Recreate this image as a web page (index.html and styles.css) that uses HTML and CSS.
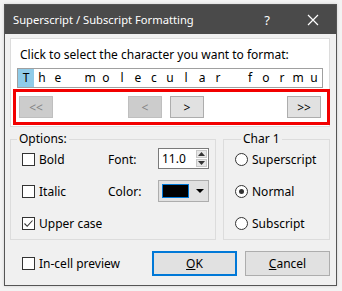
FILE: index.html
```html
<!DOCTYPE html>
<html lang="en">
<head>
    <meta charset="UTF-8">
    <title>Superscript / Subscript Formatting</title>
    <link rel="stylesheet" href="styles.css">
</head>
<body>
    <div class="window">
        <div class="titlebar">
            <span class="title">Superscript / Subscript Formatting</span>
            <span class="help">?</span>
            <span class="close">
                <svg width="12" height="12" viewBox="0 0 12 12"><path d="M1 1L11 11M11 1L1 11" stroke="#fff" stroke-width="1.2"/></svg>
            </span>
        </div>
        <div class="content">
            <div class="select-panel">
                <div class="hint">Click to select the character you want to format:</div>
                <div class="chars">
                    <span class="ch selected">T</span><span class="ch">h</span><span class="ch">e</span><span class="ch"></span><span class="ch">m</span><span class="ch">o</span><span class="ch">l</span><span class="ch">e</span><span class="ch">c</span><span class="ch">u</span><span class="ch">l</span><span class="ch">a</span><span class="ch">r</span><span class="ch"></span><span class="ch">f</span><span class="ch">o</span><span class="ch">r</span><span class="ch">m</span><span class="ch">u</span>
                </div>
                <div class="nav">
                    <button class="btn small" disabled>&lt;&lt;</button>
                    <div class="nav-mid">
                        <button class="btn small" disabled>&lt;</button>
                        <button class="btn small">&gt;</button>
                    </div>
                    <button class="btn small last">&gt;&gt;</button>
                </div>
            </div>

            <div class="groups">
                <fieldset class="group options">
                    <legend>Options:</legend>
                    <div class="opt-grid">
                        <label class="check"><span class="box"></span>Bold</label>
                        <span class="field-label">Font:</span>
                        <div class="spinner">
                            <span class="spin-value">11.0</span>
                            <span class="spin-btns">
                                <span class="spin-btn"><svg width="7" height="4" viewBox="0 0 7 4"><path d="M0 4L3.5 0L7 4Z" fill="#333"/></svg></span>
                                <span class="spin-btn"><svg width="7" height="4" viewBox="0 0 7 4"><path d="M0 0L3.5 4L7 0Z" fill="#333"/></svg></span>
                            </span>
                        </div>

                        <label class="check"><span class="box"></span>Italic</label>
                        <span class="field-label">Color:</span>
                        <div class="color-pick">
                            <span class="swatch"></span>
                            <svg width="8" height="4" viewBox="0 0 8 4"><path d="M0 0L4 4L8 0Z" fill="#000"/></svg>
                        </div>

                        <label class="check upper"><span class="box checked"><svg width="11" height="11" viewBox="0 0 11 11"><path d="M1.5 5.5L4.2 8.3L9.5 2.5" stroke="#333" stroke-width="1.1" fill="none"/></svg></span>Upper case</label>
                    </div>
                </fieldset>

                <fieldset class="group char">
                    <legend>Char 1</legend>
                    <label class="radio"><span class="dot"></span>Superscript</label>
                    <label class="radio"><span class="dot on"></span>Normal</label>
                    <label class="radio"><span class="dot"></span>Subscript</label>
                </fieldset>
            </div>

            <div class="footer">
                <label class="check"><span class="box"></span>In-cell preview</label>
                <div class="actions">
                    <button class="btn big default"><u>O</u>K</button>
                    <button class="btn big"><u>C</u>ancel</button>
                </div>
            </div>
        </div>
    </div>
</body>
</html>
```

FILE: styles.css
```css
body, html {
    margin: 0;
    background: #f3f3f3;
    font-family: "Noto Sans", "Open Sans", sans-serif;
    font-size: 12px;
    color: #000;
}

.window {
    margin: 4px;
    width: 331px;
    height: 280px;
    border: 1px solid #555;
    background: #f0f0f0;
    display: flex;
    flex-direction: column;
    box-shadow: 0 0 3px rgba(0, 0, 0, 0.15);
}

.titlebar {
    height: 29px;
    background: #4a4a4a;
    color: #fff;
    display: flex;
    align-items: center;
    padding-left: 8px;
}

.title {
    flex: 1;
    font-size: 11.2px;
}

.help {
    width: 46px;
    text-align: center;
    font-size: 13px;
}

.close {
    width: 46px;
    display: flex;
    justify-content: center;
}

.content {
    padding: 4px 6px 0 5px;
}

.select-panel {
    background: #fff;
    border: 1px solid #dcdcdc;
    height: 87px;
    padding: 0 0 0 2px;
}

.hint {
    margin: 8px 0 0 7px;
    line-height: 16px;
}

.chars {
    margin: 5px 0 0 4px;
    width: 304px;
    height: 18px;
    border: 1px solid #a0a0a0;
    display: grid;
    grid-template-columns: repeat(19, 1fr);
}

.ch {
    text-align: center;
    line-height: 18px;
}

.ch.selected {
    background: #8fcbe8;
}

.nav {
    margin-top: 1px;
    width: 317px;
    height: 36px;
    box-sizing: border-box;
    border: 3px solid #f20000;
    display: flex;
    align-items: center;
    padding: 0 6px 0 3px;
}

.nav-mid {
    display: flex;
    gap: 8px;
    margin-left: 75px;
}

.nav .last {
    margin-left: auto;
}

.btn {
    font-family: inherit;
    font-size: 12px;
    background: #e1e1e1;
    border: 1px solid #adadad;
    color: #000;
    padding: 0;
    margin: 0;
}

.btn.small {
    width: 34px;
    height: 22px;
}

.btn:disabled {
    background: #cccccc;
    border-color: #bfbfbf;
    color: #838383;
}

.groups {
    display: flex;
    gap: 7px;
    margin-top: 5px;
}

.group {
    margin: 0;
    border: 1px solid #dcdcdc;
    padding: 0;
    box-sizing: border-box;
    height: 108px;
}

.group legend {
    padding: 0 2px;
    margin-left: 6px;
    line-height: 14px;
}

.options {
    width: 206px;
}

.char {
    width: 107px;
    display: flex;
    flex-direction: column;
    gap: 10px;
    padding: 2px 0 0 11px;
}

.opt-grid {
    display: grid;
    grid-template-columns: 86px 50px 51px;
    grid-template-rows: 22px 22px 22px;
    row-gap: 10px;
    align-items: center;
    padding: 2px 0 0 11px;
}

.check {
    display: flex;
    align-items: center;
    gap: 4px;
}

.box {
    width: 11px;
    height: 11px;
    border: 1px solid #333;
    background: #fff;
    display: flex;
    align-items: center;
    justify-content: center;
}

.upper {
    grid-column: 1 / 3;
}

.spinner {
    height: 19px;
    border: 1px solid #7a7a7a;
    background: #fff;
    display: flex;
    margin-top: -2px;
}

.spin-value {
    flex: 1;
    padding-left: 3px;
    line-height: 19px;
}

.spin-btns {
    width: 11px;
    display: flex;
    flex-direction: column;
    gap: 1px;
    padding: 1px;
}

.spin-btn {
    flex: 1;
    background: #e6e6e6;
    border: 1px solid #c8c8c8;
    display: flex;
    align-items: center;
    justify-content: center;
}

.color-pick {
    height: 20px;
    background: #e1e1e1;
    border: 1px solid #adadad;
    display: flex;
    align-items: center;
    gap: 7px;
    padding-left: 3px;
}

.swatch {
    width: 25px;
    height: 12px;
    background: #000;
    border: 1px solid #0078d7;
}

.radio {
    display: flex;
    align-items: center;
    gap: 4px;
    height: 22px;
}

.dot {
    width: 11px;
    height: 11px;
    border: 1px solid #333;
    border-radius: 50%;
    background: #fff;
    display: flex;
    align-items: center;
    justify-content: center;
}

.dot.on::after {
    content: "";
    width: 5px;
    height: 5px;
    border-radius: 50%;
    background: #333;
}

.footer {
    display: flex;
    align-items: center;
    justify-content: space-between;
    margin-top: 11px;
    padding-left: 12px;
}

.actions {
    display: flex;
    gap: 8px;
}

.btn.big {
    width: 85px;
    height: 25px;
}

.btn.default {
    border: 2px solid #0078d7;
}
```
